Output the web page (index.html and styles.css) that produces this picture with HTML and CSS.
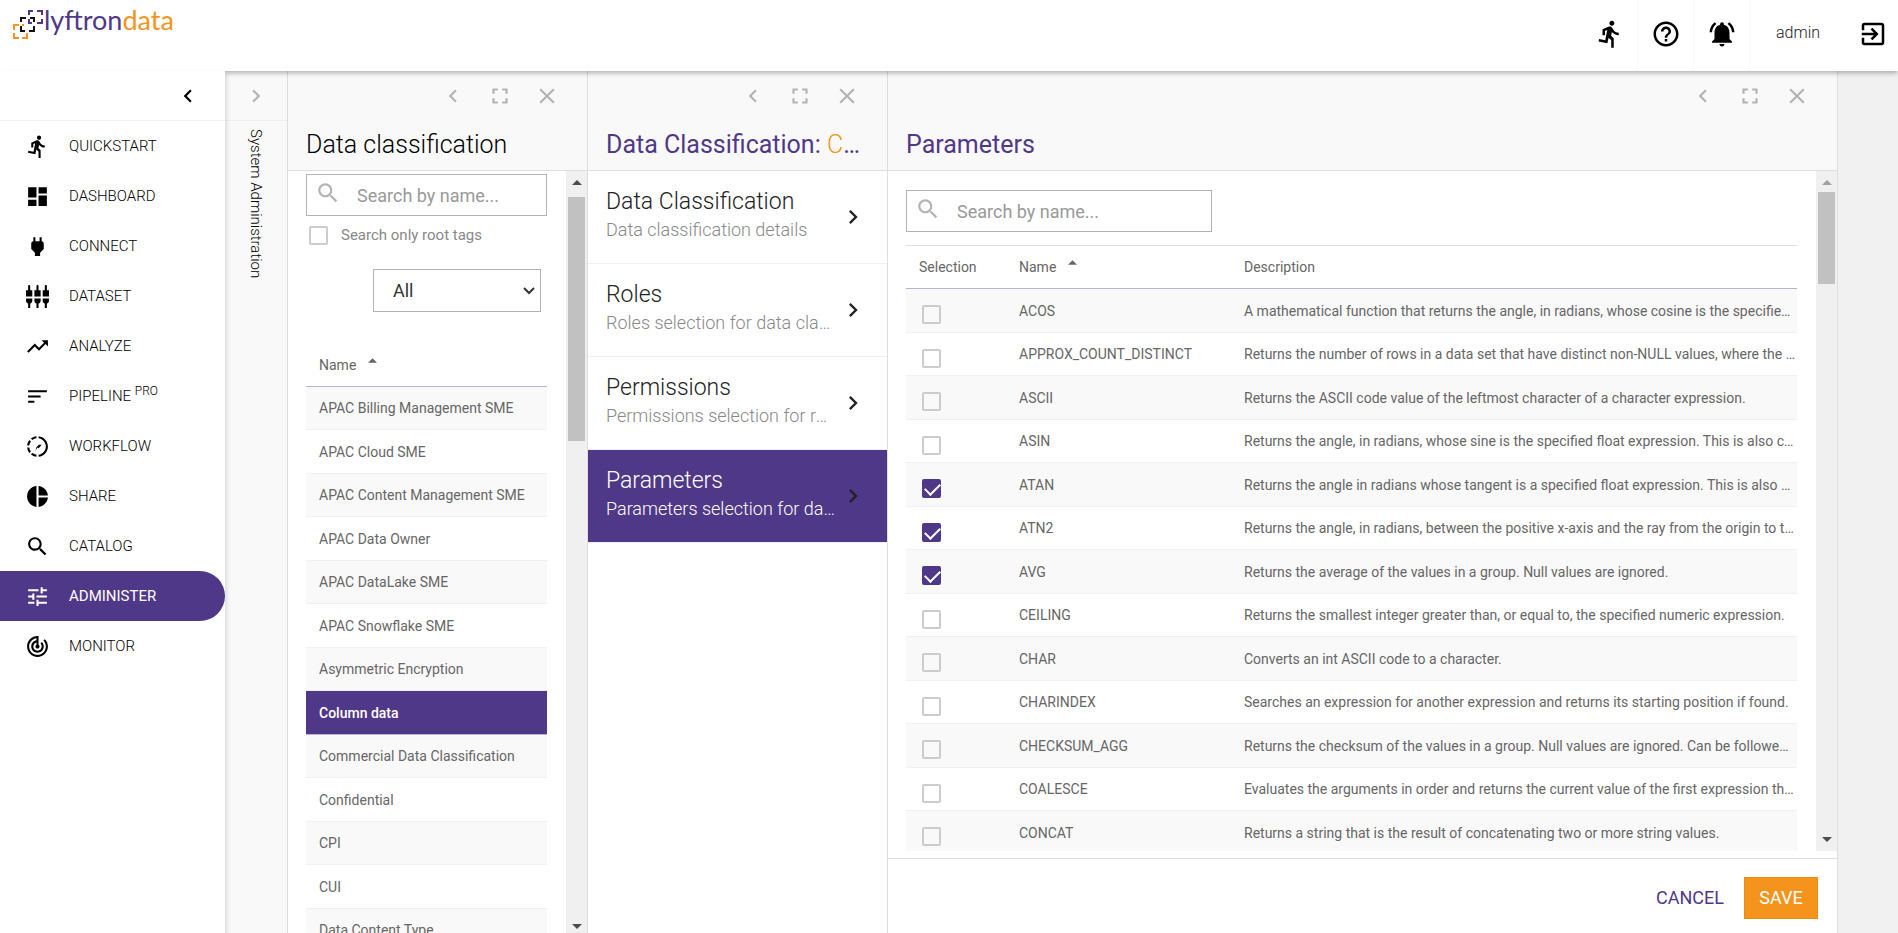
FILE: index.html
```html
<!DOCTYPE html>
<html lang="en">
	<head>
		<meta charset="utf-8">
		<title>Lyftrondata</title>
		<link rel="stylesheet" href="styles.css">
	</head>
	<body>
		<svg class="sprite" aria-hidden="true">
			<symbol id="run" viewBox="0 0 24 24"><path d="M13.49 5.48c1.1 0 2-.9 2-2s-.9-2-2-2-2 .9-2 2 .9 2 2 2zm-3.6 13.9l1-4.4 2.1 2v6h2v-7.5l-2.1-2 .6-3c1.3 1.5 3.3 2.5 5.5 2.5v-2c-1.9 0-3.5-1-4.3-2.4l-1-1.6c-.4-.6-1-1-1.7-1-.3 0-.5.1-.8.1l-5.2 2.2v4.7h2v-3.4l1.8-.7-1.6 8.1-4.9-1-.4 2 7 1.4z"/></symbol>
			<symbol id="help" viewBox="0 0 24 24"><path d="M11 18h2v-2h-2v2zm1-16C6.48 2 2 6.48 2 12s4.48 10 10 10 10-4.48 10-10S17.52 2 12 2zm0 18c-4.41 0-8-3.59-8-8s3.59-8 8-8 8 3.59 8 8-3.59 8-8 8zm0-14c-2.21 0-4 1.79-4 4h2c0-1.1.9-2 2-2s2 .9 2 2c0 2-3 1.75-3 5h2c0-2.25 3-2.5 3-5 0-2.21-1.79-4-4-4z"/></symbol>
			<symbol id="bell" viewBox="0 0 24 24"><path d="M7.58 4.08L6.15 2.65C3.75 4.48 2.17 7.3 2.03 10.5h2c.15-2.65 1.51-4.97 3.55-6.42zm12.39 6.42h2c-.15-3.2-1.73-6.02-4.12-7.85l-1.42 1.43c2.02 1.45 3.39 3.77 3.54 6.42zM18 11c0-3.07-1.64-5.64-4.5-6.32V4c0-.83-.67-1.5-1.5-1.5s-1.5.67-1.5 1.5v.68C7.63 5.36 6 7.92 6 11v5l-2 2v1h16v-1l-2-2v-5zm-6 11c.14 0 .27-.01.4-.04.65-.14 1.18-.58 1.44-1.18.1-.24.15-.5.15-.78h-4c.01 1.1.9 2 2.01 2z"/></symbol>
			<symbol id="exit" viewBox="0 0 24 24"><path d="M10.09 15.59L11.5 17l5-5-5-5-1.41 1.41L12.67 11H3v2h9.67l-2.58 2.59zM19 3H5c-1.11 0-2 .9-2 2v4h2V5h14v14H5v-4H3v4c0 1.1.89 2 2 2h14c1.1 0 2-.9 2-2V5c0-1.1-.9-2-2-2z"/></symbol>
			<symbol id="dashboard" viewBox="0 0 24 24"><path d="M3 13h8V3H3v10zm0 8h8v-6H3v6zm10 0h8V11h-8v10zm0-18v6h8V3h-8z"/></symbol>
			<symbol id="power" viewBox="0 0 24 24"><path d="M16.01 7L16 3h-2v4h-4V3H8v4h-.01C7 6.99 6 7.99 6 8.99v5.49L9.5 18v3h5v-3l3.5-3.51v-5.5c0-1-1-2-1.99-1.99z"/></symbol>
			<symbol id="dataset" viewBox="0 0 24 24"><path d="M5 2c0-.55-.45-1-1-1s-1 .45-1 1v4H1v6h6V6H5V2zm4 14c0 1.3.84 2.4 2 2.82V23h2v-4.18c1.16-.41 2-1.51 2-2.82v-2H9v2zm-8 0c0 1.3.84 2.4 2 2.82V23h2v-4.18C6.16 18.4 7 17.3 7 16v-2H1v2zM21 6V2c0-.55-.45-1-1-1s-1 .45-1 1v4h-2v6h6V6h-2zm-8-4c0-.55-.45-1-1-1s-1 .45-1 1v4H9v6h6V6h-2V2zm4 14c0 1.3.84 2.4 2 2.82V23h2v-4.18c1.16-.41 2-1.51 2-2.82v-2h-6v2z"/></symbol>
			<symbol id="trend" viewBox="0 0 24 24"><path d="M16 6l2.29 2.29-4.88 4.88-4-4L2 16.59 3.41 18l6-6 4 4 6.3-6.29L22 12V6z"/></symbol>
			<symbol id="sort" viewBox="0 0 24 24"><path d="M3 18h6v-2H3v2zM3 6v2h18V6H3zm0 7h12v-2H3v2z"/></symbol>
			<symbol id="workflow" viewBox="0 0 24 24"><path d="M11 4.07V2.05c-2.01.2-3.84 1-5.32 2.21L7.1 5.69c1.11-.86 2.44-1.44 3.9-1.62zM5.69 7.1L4.26 5.68C3.05 7.16 2.25 8.99 2.05 11h2.02c.18-1.46.76-2.79 1.62-3.9zM4.07 13H2.05c.2 2.01 1 3.84 2.21 5.32l1.43-1.43c-.86-1.1-1.44-2.43-1.62-3.89zm1.61 6.74C7.16 20.95 9 21.75 11 21.95v-2.02c-1.46-.18-2.79-.76-3.9-1.62l-1.42 1.43zM22 12c0 5.16-3.92 9.42-8.95 9.95v-2.02C16.97 19.41 20 16.05 20 12s-3.03-7.41-6.95-7.93V2.05C18.08 2.58 22 6.84 22 12zM16 10.4l-2.8 3.2-1.4-.6-1.8 3.2.9-3.6 2.4-2.2z"/></symbol>
			<symbol id="pie" viewBox="0 0 24 24"><path d="M11 2v20c-5.07-.5-9-4.79-9-10s3.93-9.5 9-10zm2.03 0v8.99H22c-.47-4.74-4.24-8.52-8.97-8.99zm0 11.01V22c4.74-.47 8.5-4.25 8.97-8.99h-8.97z"/></symbol>
			<symbol id="search" viewBox="0 0 24 24"><path d="M15.5 14h-.79l-.28-.27C15.41 12.59 16 11.11 16 9.5 16 5.91 13.09 3 9.5 3S3 5.91 3 9.5 5.91 16 9.5 16c1.61 0 3.09-.59 4.23-1.57l.27.28v.79l5 4.99L20.49 19l-4.99-5zm-6 0C7.01 14 5 11.99 5 9.5S7.01 5 9.5 5 14 7.01 14 9.5 11.99 14 9.5 14z"/></symbol>
			<symbol id="tune" viewBox="0 0 24 24"><path d="M3 17v2h6v-2H3zM3 5v2h10V5H3zm10 16v-2h8v-2h-8v-2h-2v6h2zM7 9v2H3v2h4v2h2V9H7zm14 4v-2H11v2h10zm-6-4h2V7h4V5h-4V3h-2v6z"/></symbol>
			<symbol id="radar" viewBox="0 0 24 24"><path d="M19.07 4.93l-1.41 1.41C19.1 7.79 20 9.79 20 12c0 4.42-3.58 8-8 8s-8-3.58-8-8c0-4.08 3.05-7.44 7-7.93v2.02C8.16 6.57 6 9.03 6 12c0 3.31 2.69 6 6 6s6-2.69 6-6c0-1.66-.67-3.16-1.76-4.24l-1.41 1.41C15.55 9.9 16 10.9 16 12c0 2.21-1.79 4-4 4s-4-1.79-4-4c0-1.86 1.28-3.41 3-3.86v2.14c-.6.35-1 .98-1 1.72 0 1.1.9 2 2 2s2-.9 2-2c0-.74-.4-1.38-1-1.72V2h-1C6.48 2 2 6.48 2 12s4.48 10 10 10 10-4.48 10-10c0-2.76-1.12-5.26-2.93-7.07z"/></symbol>
			<symbol id="left" viewBox="0 0 24 24"><path d="M15.41 7.41L14 6l-6 6 6 6 1.41-1.41L10.83 12z"/></symbol>
			<symbol id="right" viewBox="0 0 24 24"><path d="M10 6L8.59 7.41 13.17 12l-4.58 4.59L10 18l6-6z"/></symbol>
			<symbol id="full" viewBox="0 0 24 24"><path d="M7 14H5v5h5v-2H7v-3zm-2-4h2V7h3V5H5v5zm12 7h-3v2h5v-5h-2v3zM14 5v2h3v3h2V5h-5z"/></symbol>
			<symbol id="close" viewBox="0 0 24 24"><path d="M19 6.41L17.59 5 12 10.59 6.41 5 5 6.41 10.59 12 5 17.59 6.41 19 12 13.41 17.59 19 19 17.59 13.41 12z"/></symbol>
			<symbol id="up" viewBox="0 0 10 5"><path d="M5 0l5 5H0z"/></symbol>
			<symbol id="down" viewBox="0 0 10 5"><path d="M0 0h10L5 5z"/></symbol>
		</svg>

		<header class="topbar">
			<a class="logo" href="#">
				<svg class="logo-mark" viewBox="0 0 32 30" fill="none" stroke-width="2">
					<path stroke="#f7941d" d="M7 15H2v5m0 3v5h5m3 0h5v-5M12 15h-2"/>
					<path stroke="#111" d="M14 8H9v4m0 4v5h4m4 0h5v-5m0-4V8h-4"/>
					<path stroke="#503888" d="M21 1h-4v4m0 4v4h3m5 0h5V9m0-4V1h-5"/>
				</svg>
				<span class="logo-text">lyftron<span class="orange">data</span></span>
			</a>
			<nav class="top-actions">
				<button class="top-btn" aria-label="Quickstart"><svg><use href="#run"/></svg></button>
				<button class="top-btn" aria-label="Help"><svg><use href="#help"/></svg></button>
				<button class="top-btn" aria-label="Notifications"><svg><use href="#bell"/></svg></button>
				<a class="user" href="#">admin</a>
				<button class="top-btn logout" aria-label="Log out"><svg><use href="#exit"/></svg></button>
			</nav>
		</header>

		<div class="layout">
			<aside class="sidebar">
				<div class="sidebar-head">
					<button class="icon-btn" aria-label="Collapse menu"><svg><use href="#left"/></svg></button>
				</div>
				<nav class="menu">
					<a href="#"><svg><use href="#run"/></svg><span>QUICKSTART</span></a>
					<a href="#"><svg><use href="#dashboard"/></svg><span>DASHBOARD</span></a>
					<a href="#"><svg><use href="#power"/></svg><span>CONNECT</span></a>
					<a href="#"><svg><use href="#dataset"/></svg><span>DATASET</span></a>
					<a href="#"><svg><use href="#trend"/></svg><span>ANALYZE</span></a>
					<a href="#"><svg><use href="#sort"/></svg><span>PIPELINE <sup>PRO</sup></span></a>
					<a href="#"><svg><use href="#workflow"/></svg><span>WORKFLOW</span></a>
					<a href="#"><svg><use href="#pie"/></svg><span>SHARE</span></a>
					<a href="#"><svg><use href="#search"/></svg><span>CATALOG</span></a>
					<a href="#" class="active"><svg><use href="#tune"/></svg><span>ADMINISTER</span></a>
					<a href="#"><svg><use href="#radar"/></svg><span>MONITOR</span></a>
				</nav>
			</aside>

			<section class="panel collapsed">
				<div class="collapsed-head">
					<button class="icon-btn" aria-label="Expand"><svg><use href="#right"/></svg></button>
				</div>
				<div class="vertical">System Administration</div>
			</section>

			<section class="panel">
				<div class="panel-head">
					<div class="tools">
						<button class="icon-btn" aria-label="Collapse"><svg><use href="#left"/></svg></button>
						<button class="icon-btn" aria-label="Full screen"><svg><use href="#full"/></svg></button>
						<button class="icon-btn" aria-label="Close"><svg><use href="#close"/></svg></button>
					</div>
					<h2 class="light">Data classification</h2>
				</div>
				<div class="panel-body">
					<div class="scroll tags">
						<div class="search">
							<svg><use href="#search"/></svg>
							<input type="text" placeholder="Search by name..." aria-label="Search tags">
						</div>
						<div class="root-only">
							<input type="checkbox" id="root">
							<label for="root">Search only root tags</label>
						</div>
						<select class="filter" aria-label="Filter">
							<option>All</option>
						</select>
						<table class="grid">
							<thead>
								<tr><th>Name <svg class="arrow"><use href="#up"/></svg></th></tr>
							</thead>
							<tbody>
								<tr><td>APAC Billing Management SME</td></tr>
								<tr><td>APAC Cloud SME</td></tr>
								<tr><td>APAC Content Management SME</td></tr>
								<tr><td>APAC Data Owner</td></tr>
								<tr><td>APAC DataLake SME</td></tr>
								<tr><td>APAC Snowflake SME</td></tr>
								<tr><td>Asymmetric Encryption</td></tr>
								<tr class="selected"><td>Column data</td></tr>
								<tr><td>Commercial Data Classification</td></tr>
								<tr><td>Confidential</td></tr>
								<tr><td>CPI</td></tr>
								<tr><td>CUI</td></tr>
								<tr><td>Data Content Type</td></tr>
							</tbody>
						</table>
					</div>
					<div class="scrollbar">
						<svg><use href="#up"/></svg>
						<div class="track"><div class="thumb thumb-tags"></div></div>
						<svg><use href="#down"/></svg>
					</div>
				</div>
			</section>

			<section class="panel">
				<div class="panel-head">
					<div class="tools">
						<button class="icon-btn" aria-label="Collapse"><svg><use href="#left"/></svg></button>
						<button class="icon-btn" aria-label="Full screen"><svg><use href="#full"/></svg></button>
						<button class="icon-btn" aria-label="Close"><svg><use href="#close"/></svg></button>
					</div>
					<h2>Data Classification: <span class="tag-name">Column data</span></h2>
				</div>
				<nav class="steps">
					<a href="#">
						<div class="step-text">
							<div class="step-title">Data Classification</div>
							<div class="step-info">Data classification details</div>
						</div>
						<svg><use href="#right"/></svg>
					</a>
					<a href="#">
						<div class="step-text">
							<div class="step-title">Roles</div>
							<div class="step-info">Roles selection for data classification</div>
						</div>
						<svg><use href="#right"/></svg>
					</a>
					<a href="#">
						<div class="step-text">
							<div class="step-title">Permissions</div>
							<div class="step-info">Permissions selection for roles</div>
						</div>
						<svg><use href="#right"/></svg>
					</a>
					<a href="#" class="active">
						<div class="step-text">
							<div class="step-title">Parameters</div>
							<div class="step-info">Parameters selection for data classification</div>
						</div>
						<svg><use href="#right"/></svg>
					</a>
				</nav>
			</section>

			<section class="panel wide">
				<div class="panel-head">
					<div class="tools">
						<button class="icon-btn" aria-label="Collapse"><svg><use href="#left"/></svg></button>
						<button class="icon-btn" aria-label="Full screen"><svg><use href="#full"/></svg></button>
						<button class="icon-btn" aria-label="Close"><svg><use href="#close"/></svg></button>
					</div>
					<h2>Parameters</h2>
				</div>
				<div class="panel-body">
					<div class="scroll params">
						<div class="search">
							<svg><use href="#search"/></svg>
							<input type="text" placeholder="Search by name..." aria-label="Search parameters">
						</div>
						<table class="grid functions">
							<colgroup>
								<col class="col-check">
								<col class="col-name">
								<col>
							</colgroup>
							<thead>
								<tr>
									<th>Selection</th>
									<th>Name <svg class="arrow"><use href="#up"/></svg></th>
									<th>Description</th>
								</tr>
							</thead>
							<tbody>
								<tr><td><input type="checkbox" aria-label="ACOS"></td><td>ACOS</td><td>A mathematical function that returns the angle, in radians, whose cosine is the specified float expression.</td></tr>
								<tr><td><input type="checkbox" aria-label="APPROX_COUNT_DISTINCT"></td><td>APPROX_COUNT_DISTINCT</td><td>Returns the number of rows in a data set that have distinct non-NULL values, where the data set is large.</td></tr>
								<tr><td><input type="checkbox" aria-label="ASCII"></td><td>ASCII</td><td>Returns the ASCII code value of the leftmost character of a character expression.</td></tr>
								<tr><td><input type="checkbox" aria-label="ASIN"></td><td>ASIN</td><td>Returns the angle, in radians, whose sine is the specified float expression. This is also called arcsine.</td></tr>
								<tr><td><input type="checkbox" aria-label="ATAN" checked></td><td>ATAN</td><td>Returns the angle in radians whose tangent is a specified float expression. This is also called arctangent.</td></tr>
								<tr><td><input type="checkbox" aria-label="ATN2" checked></td><td>ATN2</td><td>Returns the angle, in radians, between the positive x-axis and the ray from the origin to the point (y, x).</td></tr>
								<tr><td><input type="checkbox" aria-label="AVG" checked></td><td>AVG</td><td>Returns the average of the values in a group. Null values are ignored.</td></tr>
								<tr><td><input type="checkbox" aria-label="CEILING"></td><td>CEILING</td><td>Returns the smallest integer greater than, or equal to, the specified numeric expression.</td></tr>
								<tr><td><input type="checkbox" aria-label="CHAR"></td><td>CHAR</td><td>Converts an int ASCII code to a character.</td></tr>
								<tr><td><input type="checkbox" aria-label="CHARINDEX"></td><td>CHARINDEX</td><td>Searches an expression for another expression and returns its starting position if found.</td></tr>
								<tr><td><input type="checkbox" aria-label="CHECKSUM_AGG"></td><td>CHECKSUM_AGG</td><td>Returns the checksum of the values in a group. Null values are ignored. Can be followed by the OVER clause.</td></tr>
								<tr><td><input type="checkbox" aria-label="COALESCE"></td><td>COALESCE</td><td>Evaluates the arguments in order and returns the current value of the first expression that is not null.</td></tr>
								<tr><td><input type="checkbox" aria-label="CONCAT"></td><td>CONCAT</td><td>Returns a string that is the result of concatenating two or more string values.</td></tr>
							</tbody>
						</table>
					</div>
					<div class="scrollbar at-top">
						<svg><use href="#up"/></svg>
						<div class="track"><div class="thumb thumb-params"></div></div>
						<svg><use href="#down"/></svg>
					</div>
				</div>
				<footer class="actions">
					<button class="cancel">CANCEL</button>
					<button class="save">SAVE</button>
				</footer>
			</section>
		</div>
	</body>
</html>
```
FILE: styles.css
```css
* {
	box-sizing: border-box;
}
:root {
	--purple: #503888;
	--orange: #f4941c;
	--line: #dedede;
	--faint: #f0f0f0;
	--head: #f9f9f9;
}
body {
	margin: 0;
	height: 100vh;
	display: flex;
	flex-direction: column;
	overflow: hidden;
	background: #f1f1f1;
	color: #222;
	font-family: Roboto, "Liberation Sans", sans-serif;
	font-size: 14px;
}
a {
	color: inherit;
	text-decoration: none;
}
button {
	padding: 0;
	border: 0;
	background: none;
	font-family: inherit;
	cursor: pointer;
}
svg {
	fill: currentColor;
	flex-shrink: 0;
}
.sprite {
	display: none;
}

/* top bar */
.topbar {
	position: relative;
	z-index: 2;
	flex: 0 0 71px;
	display: flex;
	justify-content: space-between;
	background: #fff;
	box-shadow: 0 2px 5px rgba(0, 0, 0, 0.3);
}
.logo {
	display: flex;
	align-items: flex-start;
	padding: 10px 0 0 12px;
}
.logo-mark {
	width: 32px;
	height: 30px;
	fill: none;
}
.logo-text {
	color: var(--purple);
	font-family: Lato, sans-serif;
	font-size: 27px;
	line-height: 20px;
}
.orange {
	color: var(--orange);
}
.top-actions {
	display: flex;
}
.top-btn {
	width: 56px;
	display: flex;
	justify-content: center;
	padding-top: 19px;
	border-right: 1px solid #f9f9f9;
	color: #000;
}
.top-btn svg {
	width: 30px;
	height: 30px;
}
.user {
	width: 96px;
	padding-top: 22px;
	text-align: center;
	font-size: 16px;
	font-weight: 300;
	line-height: 22px;
}
.logout {
	width: 52px;
	padding-left: 2px;
	border: 0;
}

/* sidebar */
.layout {
	flex: 1;
	min-height: 0;
	display: flex;
}
.sidebar {
	position: relative;
	z-index: 3;
	flex: 0 0 225px;
	background: #fff;
	box-shadow: 2px 2px 4px rgba(0, 0, 0, 0.12);
}
.sidebar-head,
.collapsed-head {
	height: 50px;
	display: flex;
	align-items: center;
	border-bottom: 1px solid var(--faint);
}
.sidebar-head {
	justify-content: flex-end;
	padding-right: 14px;
	color: #000;
}
.icon-btn {
	width: 47px;
	height: 50px;
	display: flex;
	align-items: center;
	justify-content: center;
	color: inherit;
}
.icon-btn svg {
	width: 26px;
	height: 26px;
}
.menu a {
	height: 50px;
	display: flex;
	align-items: center;
	gap: 19px;
	padding-left: 25px;
	font-size: 15px;
	font-weight: 300;
	color: #000;
}
.menu svg {
	width: 25px;
	height: 25px;
}
.menu sup {
	font-size: 12px;
	line-height: 0;
}
.menu .active {
	border-radius: 0 25px 25px 0;
	background: var(--purple);
	color: #fff;
	font-weight: 400;
}

/* panels */
.panel {
	flex: 0 0 300px;
	min-width: 0;
	display: flex;
	flex-direction: column;
	border-right: 1px solid var(--line);
	background: #fff;
}
.panel.wide {
	flex: 1;
	margin-right: 60px;
}
.panel.collapsed {
	flex-basis: 63px;
	background: var(--head);
}
.collapsed-head {
	justify-content: center;
	color: #b3b3b3;
}
.vertical {
	width: 62px;
	padding-top: 8px;
	writing-mode: vertical-rl;
	line-height: 62px;
	font-size: 15px;
	font-weight: 300;
	color: #000;
}
.panel-head {
	flex: 0 0 100px;
	border-bottom: 1px solid var(--line);
	background: var(--head);
}
.tools {
	display: flex;
	justify-content: flex-end;
	padding-right: 17px;
	color: #b3b3b3;
}
h2 {
	margin: 0;
	padding: 8px 18px 0;
	overflow: hidden;
	white-space: nowrap;
	text-overflow: ellipsis;
	font-size: 25px;
	font-weight: 400;
	line-height: 32px;
	color: var(--purple);
}
.light {
	font-weight: 300;
	color: #000;
}
.tag-name {
	font-weight: 300;
	color: var(--orange);
}
.panel-body {
	flex: 1;
	min-height: 0;
	display: flex;
}
.scroll {
	flex: 1;
	min-width: 0;
	overflow: hidden;
	padding: 0 19px 0 18px;
}
.tags {
	padding-top: 3px;
}
.params {
	padding-top: 19px;
}

/* scrollbars with arrow buttons */
.scrollbar {
	flex: 0 0 21px;
	display: flex;
	flex-direction: column;
	align-items: center;
	padding: 9px 0;
	background: var(--faint);
	color: #4d4d4d;
}
.tags + .scrollbar {
	padding-bottom: 4px;
}
.scrollbar svg {
	width: 10px;
	height: 5px;
}
.scrollbar.at-top svg:first-child {
	color: #a0a0a0;
}
.track {
	flex: 1;
	padding: 7px 0;
}
.thumb {
	width: 17px;
	background: #c1c1c1;
}
.thumb-tags {
	height: 244px;
	margin-top: 5px;
}
.thumb-params {
	height: 92px;
}

/* inputs */
.search {
	height: 42px;
	display: flex;
	border: 1px solid #b3b3b3;
}
.params .search {
	width: 306px;
}
.search svg {
	width: 26px;
	height: 26px;
	margin: 5px 0 0 8px;
	color: #b3b3b3;
}
.search input {
	flex: 1;
	min-width: 0;
	padding: 0 8px 0 16px;
	border: 0;
	background: none;
	font-family: inherit;
	font-size: 18px;
}
.search input::placeholder {
	color: #999;
}
input[type="checkbox"] {
	appearance: none;
	display: block;
	width: 19px;
	height: 19px;
	margin: 0;
	border: 2px solid #ccc;
	border-radius: 2px;
}
input[type="checkbox"]:checked {
	border-color: var(--purple);
	background: var(--purple);
}
input[type="checkbox"]:checked::before {
	content: "";
	display: block;
	width: 13px;
	height: 7px;
	margin: 2px 0 0 1px;
	border: solid #fff;
	border-width: 0 0 2px 2px;
	transform: rotate(-45deg);
}
.root-only {
	display: flex;
	align-items: center;
	gap: 13px;
	height: 20px;
	margin-top: 9px;
	padding-left: 3px;
	font-size: 15px;
	color: #888;
}
.filter {
	appearance: none;
	display: block;
	width: 168px;
	height: 43px;
	margin: 24px 6px 31px auto;
	padding: 0 24px 0 19px;
	border: 1px solid #b3b3b3;
	border-radius: 0;
	background: #fff url("data:image/svg+xml,%3Csvg xmlns='http://www.w3.org/2000/svg' width='12' height='8' fill='none' stroke='%23333' stroke-width='2'%3E%3Cpath d='M1 1l5 5 5-5'/%3E%3C/svg%3E") no-repeat right 5px center;
	font-family: inherit;
	font-size: 18px;
	color: #333;
}

/* tables */
.grid {
	width: 100%;
	table-layout: fixed;
	border-spacing: 0;
	color: #666;
}
.grid th,
.grid td {
	height: 43px;
	padding: 0 13px;
	border-bottom: 1px solid var(--faint);
	overflow: hidden;
	white-space: nowrap;
	text-overflow: ellipsis;
	text-align: left;
	font-size: 14px;
	font-weight: 400;
}
.grid th {
	height: 44px;
	border-color: #b9b0d8;
}
.grid tbody tr:nth-child(odd) {
	background: var(--head);
}
.grid tbody tr:nth-child(even) td {
	height: 44px;
}
.functions tbody tr:nth-child(odd) td {
	height: 44px;
}
.functions tbody tr:nth-child(even) td {
	height: 43px;
}
.functions {
	margin-top: 13px;
	border-top: 1px solid var(--line);
}
.functions th {
	height: 43px;
}
.col-check {
	width: 100px;
}
.col-name {
	width: 225px;
}
.functions td:first-child {
	padding: 16px 0 0 16px;
	vertical-align: top;
}
.functions td:last-child {
	padding-right: 1px;
}
.arrow {
	width: 9px;
	height: 5px;
	margin-left: 8px;
	vertical-align: 7px;
}
.grid tbody .selected {
	background: var(--purple);
	color: #fff;
}
.selected td {
	border-color: #b9b0d8;
	font-weight: 500;
}

/* steps */
.steps a {
	height: 93px;
	display: flex;
	align-items: center;
	padding: 0 20px 0 18px;
	border-bottom: 1px solid var(--faint);
}
.steps svg {
	width: 28px;
	height: 28px;
}
.step-text {
	flex: 1;
	min-width: 0;
	padding: 0 4px 6px 0;
}
.step-title,
.step-info {
	overflow: hidden;
	white-space: nowrap;
	text-overflow: ellipsis;
	font-weight: 300;
}
.step-title {
	font-size: 23px;
	line-height: 32px;
}
.step-info {
	font-size: 18px;
	line-height: 24px;
	color: #888;
}
.steps .active {
	background: var(--purple);
}
.active .step-title,
.active .step-info {
	color: #fff;
}

/* footer */
.actions {
	flex: 0 0 75px;
	display: flex;
	justify-content: flex-end;
	align-items: center;
	gap: 20px;
	margin-top: 7px;
	padding: 3px 19px 0 0;
	border-top: 1px solid var(--line);
}
.actions button {
	height: 42px;
	font-size: 18px;
}
.cancel {
	color: var(--purple);
}
.save {
	width: 74px;
	border: 1px solid #f08c0c;
	background: var(--orange);
	color: #fff;
}
```
